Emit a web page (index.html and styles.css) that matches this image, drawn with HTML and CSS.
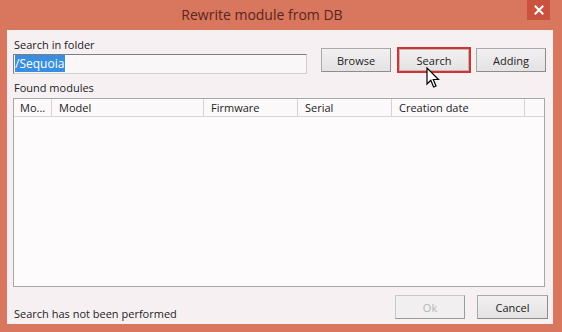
FILE: index.html
```html
<!DOCTYPE html>
<html>
<head>
<meta charset="utf-8">
<link rel="stylesheet" href="styles.css">
</head>
<body>
<div class="window">
  <div class="titlebar">
    <div class="title">Rewrite module from DB</div>
    <div class="close">
      <svg width="10" height="10" viewBox="0 0 10 10"><path d="M1.5 1.5 L8.5 8.5 M8.5 1.5 L1.5 8.5" stroke="#fff" stroke-width="2" stroke-linecap="square"/></svg>
    </div>
  </div>
  <div class="content">
    <div class="label first">Search in folder</div>
    <div class="search-row">
      <div class="input"><span class="sel">/Sequoia</span></div>
      <button class="btn browse">Browse</button>
      <button class="btn search">Search</button>
      <button class="btn adding">Adding</button>
    </div>
    <div class="label second">Found modules</div>
    <div class="table">
      <div class="thead">
        <div class="th c1">Mo...</div>
        <div class="th c2">Model</div>
        <div class="th c3">Firmware</div>
        <div class="th c4">Serial</div>
        <div class="th c5">Creation date</div>
        <div class="th c6"></div>
      </div>
      <div class="tbody"></div>
    </div>
    <div class="footer">
      <div class="status">Search has not been performed</div>
      <button class="btn ok" disabled>Ok</button>
      <button class="btn cancel">Cancel</button>
    </div>
  </div>
  <svg class="cursor" width="14" height="22" viewBox="0 0 14 22">
    <path d="M1 1 L1 17 L4.8 13.3 L7.6 20 L10 19 L7.3 12.5 L12.5 12.5 Z" fill="#fff" stroke="#000" stroke-width="1.2" stroke-linejoin="miter"/>
  </svg>
</div>
</body>
</html>
```
FILE: styles.css
```css
* { box-sizing: border-box; }
html, body { margin: 0; padding: 0; }
body {
  width: 562px;
  height: 332px;
  overflow: hidden;
  background: #d9785f;
  font-family: "Open Sans", "Noto Sans", sans-serif;
  font-size: 11px;
  color: #1e1e1e;
}
.window {
  position: relative;
  width: 562px;
  height: 332px;
  display: flex;
  flex-direction: column;
  background: #d8765e;
}
.titlebar {
  height: 30px;
  display: flex;
  align-items: flex-start;
  justify-content: center;
  position: relative;
  padding-right: 38px;
}
.title {
  margin-top: 5px;
  font-size: 14px;
  color: #5a261c;
}
.close {
  position: absolute;
  right: 12px;
  top: 0;
  width: 23px;
  height: 20px;
  background: #c9533f;
  display: flex;
  align-items: center;
  justify-content: center;
}
.content {
  margin: 0 9px 8px 7px;
  flex: 1;
  background: #f6f0f2;
  padding: 0 0 0 6px;
  display: flex;
  flex-direction: column;
}
.label { line-height: 14px; color: #222; }
.label.first { margin-top: 8px; margin-left: 1px; }
.label.second { margin-top: 7px; margin-left: 1px; }
.search-row {
  display: flex;
  align-items: flex-start;
  margin-top: 1px;
}
.input {
  width: 294px;
  height: 20px;
  margin-top: 1px;
  border: 1px solid #7e7e7e;
  border-bottom-color: #cfcfcf;
  border-right-color: #cfcfcf;
  background: #faf7f8;
  padding: 1px 1px;
  line-height: 16px;
  font-size: 12px;
}
.sel {
  background: #3a8ee0;
  color: #fff;
  padding: 0 1px 0 0;
}
.btn {
  font-family: "Open Sans", "Noto Sans", sans-serif;
  font-size: 11px;
  color: #222;
  background: linear-gradient(#f2f0f1, #e4e2e3);
  border: 1px solid #a9a9a9;
  border-right-color: #8c8c8c;
  border-bottom-color: #8c8c8c;
  height: 24px;
  padding: 0;
  margin: 0;
}
.browse { width: 70px; margin-left: 14px; margin-top: -5px; }
.search {
  width: 74px;
  height: 26px;
  margin-left: 6px;
  margin-top: -6px;
  border: 2px solid #d4322e;
  box-shadow: inset 0 0 0 1px #b9b9b9;
}
.adding { width: 70px; margin-left: 5px; margin-top: -5px; }
.table {
  margin-top: 3px;
  width: 532px;
  height: 189px;
  border: 1px solid #a8a8a8;
  background: #fdfbfc;
  display: flex;
  flex-direction: column;
}
.thead {
  display: flex;
  height: 18px;
  border-bottom: 1px solid #d6d6d6;
  background: #fbf9fa;
}
.th {
  line-height: 17px;
  padding-left: 7px;
  border-right: 1px solid #d3d3d3;
  color: #222;
  white-space: nowrap;
  overflow: hidden;
}
.c1 { width: 38px; padding-left: 6px; }
.c2 { width: 152px; }
.c3 { width: 94px; }
.c4 { width: 94px; }
.c5 { width: 133px; }
.c6 { flex: 1; border-right: none; }
.tbody { flex: 1; }
.footer {
  display: flex;
  align-items: flex-start;
  margin-top: 8px;
}
.status {
  margin-top: 12px;
  margin-left: 1px;
  width: 381px;
  line-height: 14px;
}
.ok {
  width: 70px;
  color: #b6b6b6;
  background: #f1eff0;
  border-color: #c8c8c8;
  border-right-color: #9a9a9a;
  border-bottom-color: #9a9a9a;
}
.cancel { width: 71px; margin-left: 12px; }
.cursor {
  position: absolute;
  left: 426px;
  top: 67px;
}
```
